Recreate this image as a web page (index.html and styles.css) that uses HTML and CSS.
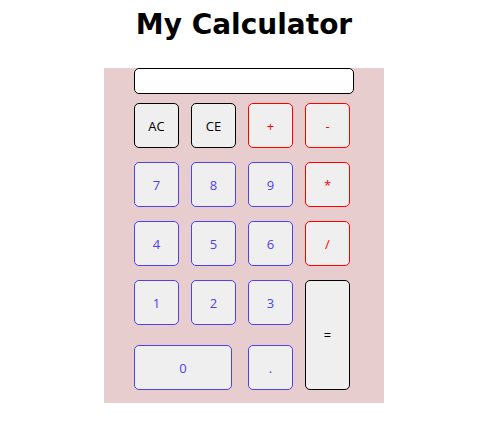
FILE: index.html
```html
<!DOCTYPE html>
<html>
<head>
<meta charset="utf-8">
<title>My Calculator</title>
<link rel="stylesheet" href="styles.css">
</head>
<body>
<h1 class="title">My Calculator</h1>
<div class="calc">
  <input class="display" type="text">
  <div class="keys">
    <button class="key key-dark">AC</button>
    <button class="key key-dark">CE</button>
    <button class="key key-op">+</button>
    <button class="key key-op">-</button>
    <button class="key key-num">7</button>
    <button class="key key-num">8</button>
    <button class="key key-num">9</button>
    <button class="key key-op">*</button>
    <button class="key key-num">4</button>
    <button class="key key-num">5</button>
    <button class="key key-num">6</button>
    <button class="key key-op">/</button>
    <button class="key key-num">1</button>
    <button class="key key-num">2</button>
    <button class="key key-num">3</button>
    <button class="key key-dark key-equals">=</button>
    <button class="key key-num key-last key-zero">0</button>
    <button class="key key-num key-last">.</button>
  </div>
</div>
</body>
</html>
```
FILE: styles.css
```css
html, body {
  background: #ffffff;
}
body {
  margin: 0;
  padding: 0 7px 0 9px;
}
.title {
  margin: 0;
  padding-top: 8px;
  height: 68px;
  box-sizing: border-box;
  text-align: center;
  font-family: "DejaVu Sans", sans-serif;
  font-weight: bold;
  font-size: 28px;
  line-height: 34px;
  color: #000;
}
.calc {
  width: 280px;
  margin: 0 auto;
  box-sizing: border-box;
  padding: 0 30px 13px;
  background: rgb(232, 205, 206);
}
.display {
  display: block;
  width: 220px;
  height: 26px;
  margin: 0;
  padding: 0 6px;
  box-sizing: border-box;
  border: 1px solid #000;
  border-radius: 5px;
  background: #fff;
  font-family: "Open Sans", sans-serif;
  font-size: 14px;
}
.keys {
  margin-top: 9px;
  display: grid;
  grid-template-columns: repeat(4, 45px);
  grid-template-rows: 45px 45px 45px 45px 51px;
  column-gap: 12px;
  row-gap: 14px;
}
.key {
  margin: 0;
  padding: 0;
  box-sizing: border-box;
  background: #efefef;
  border: 1px solid #000;
  border-radius: 5px;
  font-family: "Open Sans", sans-serif;
  font-size: 13px;
  color: #000;
}
.key-dark {
  border-color: #000;
  color: #000;
}
.key-op {
  border-color: #ff0000;
  color: #ff0000;
}
.key-num {
  border-color: rgb(80, 64, 240);
  color: rgb(80, 64, 240);
}
.key-equals {
  grid-column: 4;
  grid-row: 4 / 6;
}
.key-last {
  align-self: end;
  height: 45px;
}
.key-zero {
  grid-column: 1 / 3;
  width: 98px;
}
```
